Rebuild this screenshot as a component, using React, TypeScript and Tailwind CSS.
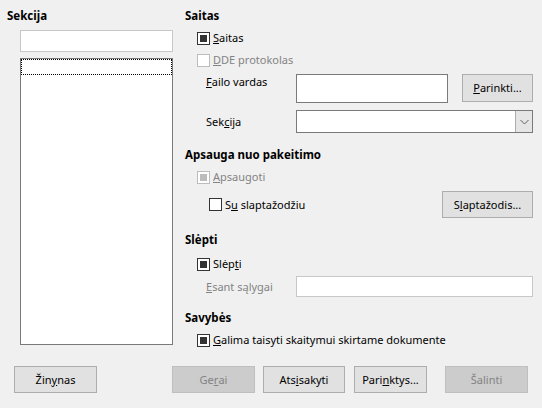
import React from "react";

type CheckProps = {
  checked?: boolean;
  disabled?: boolean;
};

function Box({ checked, disabled }: CheckProps) {
  return (
    <span
      className={`flex h-[13px] w-[13px] shrink-0 items-center justify-center border bg-white ${
        disabled ? "border-[#bcbcbc]" : "border-[#333333]"
      }`}
    >
      {checked && (
        <span className={`h-[7px] w-[7px] ${disabled ? "bg-[#bcbcbc]" : "bg-[#333333]"}`} />
      )}
    </span>
  );
}

function Check({
  checked,
  disabled,
  children,
  className = "",
}: CheckProps & { children: React.ReactNode; className?: string }) {
  return (
    <div className={`flex h-[16px] items-center gap-[3px] ${className}`}>
      <Box checked={checked} disabled={disabled} />
      <span className={disabled ? "text-[#838383]" : "text-black"}>{children}</span>
    </div>
  );
}

function Btn({
  children,
  disabled,
  className = "",
}: {
  children: React.ReactNode;
  disabled?: boolean;
  className?: string;
}) {
  return (
    <div
      className={`flex h-[27px] shrink-0 items-center justify-center border ${
        disabled
          ? "border-[#bfbfbf] bg-[#cccccc] text-[#838383]"
          : "border-[#adadad] bg-[#e1e1e1] text-black"
      } ${className}`}
    >
      {children}
    </div>
  );
}

export default function App() {
  return (
    <div
      className="flex h-[408px] w-[542px] flex-col bg-[#f0f0f0] text-[11px] leading-[16px] text-black"
      style={{ fontFamily: '"Noto Sans", "Open Sans", sans-serif' }}
    >
      <div className="flex h-[366px]">
        {/* --- left: section list --- */}
        <div className="ml-[7px] flex w-[166px] shrink-0 flex-col pt-[8px]">
          <div className="h-[16px] text-[11.5px] font-bold">Sekcija</div>
          <div className="ml-[13px] mt-[6px] h-[22px] w-[153px] border border-[#c8c8c8] bg-white" />
          <div className="ml-[13px] mt-[6px] h-[287px] w-[153px] border border-[#7a7a7a] bg-white">
            <div className="h-[16px] border border-dotted border-black" />
          </div>
        </div>

        {/* --- right: options --- */}
        <div className="ml-[12px] flex w-[348px] shrink-0 flex-col pt-[8px]">
          <div className="h-[16px] text-[11.5px] font-bold">Saitas</div>
          <Check checked className="ml-[12px] mt-[6px]">
            <span className="underline">S</span>aitas
          </Check>
          <Check disabled className="ml-[12px] mt-[6px]">
            <span className="underline">D</span>DE protokolas
          </Check>

          <div className="mt-[6px] flex items-start">
            <div className="ml-[21px] w-[90px] shrink-0">
              <span className="underline">F</span>ailo vardas
            </div>
            <div className="h-[29px] w-[152px] shrink-0 border border-[#7a7a7a] bg-white" />
            <Btn className="ml-[14px] w-[71px] !h-[28px]">
              <span className="underline">P</span>arinkti...
            </Btn>
          </div>

          <div className="mt-[7px] flex items-center">
            <div className="ml-[21px] w-[90px] shrink-0">
              Sek<span className="underline">c</span>ija
            </div>
            <div className="flex h-[23px] w-[237px] shrink-0 border border-[#7a7a7a] bg-white">
              <div className="flex-1" />
              <div className="flex w-[17px] items-center justify-center border-l border-[#adadad] bg-[#e5e5e5]">
                <svg width="9" height="6" viewBox="0 0 9 6" fill="none" stroke="#606060" strokeWidth="1">
                  <path d="M0.5 1 L4.5 5 L8.5 1" />
                </svg>
              </div>
            </div>
          </div>

          <div className="mt-[14px] h-[16px] text-[11.5px] font-bold">Apsauga nuo pakeitimo</div>
          <Check checked disabled className="ml-[12px] mt-[6px]">
            <span className="underline">A</span>psaugoti
          </Check>
          <div className="mt-[6px] flex h-[27px] items-center">
            <Check className="ml-[24px]">
              S<span className="underline">u</span> slaptažodžiu
            </Check>
            <div className="flex-1" />
            <Btn className="w-[91px]">
              S<span className="underline">l</span>aptažodis...
            </Btn>
          </div>

          <div className="mt-[14px] h-[16px] text-[11.5px] font-bold">Slėpti</div>
          <Check checked className="ml-[12px] mt-[8px]">
            Slėp<span className="underline">t</span>i
          </Check>
          <div className="mt-[4px] flex items-center">
            <div className="ml-[21px] w-[90px] shrink-0 text-[#838383]">
              <span className="underline">E</span>sant sąlygai
            </div>
            <div className="h-[21px] w-[237px] shrink-0 border border-[#c8c8c8] bg-white" />
          </div>

          <div className="mt-[13px] h-[16px] text-[11.5px] font-bold">Savybės</div>
          <Check checked className="ml-[12px] mt-[6px]">
            <span className="underline">G</span>alima taisyti skaitymui skirtame dokumente
          </Check>
        </div>
      </div>

      {/* --- bottom buttons --- */}
      <div className="flex">
        <Btn className="ml-[14px] w-[83px]">
          Žin<span className="underline">y</span>nas
        </Btn>
        <Btn disabled className="ml-[75px] w-[83px]">
          Ge<span className="underline">r</span>ai
        </Btn>
        <Btn className="ml-[8px] w-[82px]">
          Ats<span className="underline">i</span>sakyti
        </Btn>
        <Btn className="ml-[9px] w-[73px]">
          Pari<span className="underline">n</span>ktys...
        </Btn>
        <Btn disabled className="ml-[18px] w-[83px]">
          Šalinti
        </Btn>
      </div>
    </div>
  );
}
